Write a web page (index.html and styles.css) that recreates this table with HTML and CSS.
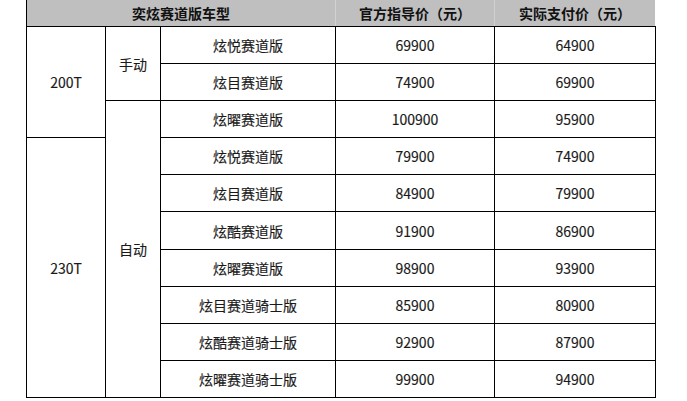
FILE: index.html
```html
<!DOCTYPE html>
<html lang="zh-CN">
<head>
<meta charset="utf-8">
<title>奕炫赛道版车型价格</title>
<link rel="stylesheet" href="styles.css">
</head>
<body>
<table class="price-table">
  <colgroup>
    <col class="c-engine">
    <col class="c-trans">
    <col class="c-model">
    <col class="c-official">
    <col class="c-actual">
  </colgroup>
  <thead>
    <tr class="head-row">
      <th colspan="3" class="first">奕炫赛道版车型</th>
      <th>官方指导价（元）</th>
      <th class="last">实际支付价（元）</th>
    </tr>
  </thead>
  <tbody>
    <tr>
      <td rowspan="3">200T</td>
      <td rowspan="2">手动</td>
      <td>炫悦赛道版</td>
      <td>69900</td>
      <td>64900</td>
    </tr>
    <tr>
      <td>炫目赛道版</td>
      <td>74900</td>
      <td>69900</td>
    </tr>
    <tr>
      <td rowspan="8">自动</td>
      <td>炫曜赛道版</td>
      <td>100900</td>
      <td>95900</td>
    </tr>
    <tr>
      <td rowspan="7">230T</td>
      <td>炫悦赛道版</td>
      <td>79900</td>
      <td>74900</td>
    </tr>
    <tr>
      <td>炫目赛道版</td>
      <td>84900</td>
      <td>79900</td>
    </tr>
    <tr>
      <td>炫酷赛道版</td>
      <td>91900</td>
      <td>86900</td>
    </tr>
    <tr>
      <td>炫曜赛道版</td>
      <td>98900</td>
      <td>93900</td>
    </tr>
    <tr>
      <td>炫目赛道骑士版</td>
      <td>85900</td>
      <td>80900</td>
    </tr>
    <tr>
      <td>炫酷赛道骑士版</td>
      <td>92900</td>
      <td>87900</td>
    </tr>
    <tr>
      <td>炫曜赛道骑士版</td>
      <td>99900</td>
      <td>94900</td>
    </tr>
  </tbody>
</table>
</body>
</html>
```

FILE: styles.css
```css
html, body {
  margin: 0;
  padding: 0;
  background: #ffffff;
}

body {
  font-family: "Noto Sans CJK SC", "Microsoft YaHei", "Liberation Sans", sans-serif;
  color: #1a1a1a;
}

.price-table {
  border-collapse: collapse;
  table-layout: fixed;
  margin-left: 26px;
  width: 630px;
  font-size: 14px;
}

.c-engine { width: 79px; }
.c-trans { width: 55px; }
.c-model { width: 175px; }
.c-official { width: 159px; }
.c-actual { width: 161px; }

.price-table th,
.price-table td {
  padding: 0;
  text-align: center;
  vertical-align: middle;
  white-space: nowrap;
  line-height: 1;
}

.price-table th {
  background: #bfbfbf;
  color: #111111;
  font-weight: bold;
  height: 26px;
  border-left: 1px solid #d2d2d2;
  border-right: 1px solid #d2d2d2;
  border-bottom: 1px solid #000000;
}

.price-table th.first {
  border-left: 1px solid #000000;
}

.price-table th.last {
  border-right: 1px solid #ffffff;
}

.price-table td {
  border: 1px solid #000000;
  height: 36.1px;
  -webkit-text-stroke: 0.15px #1a1a1a;
}
```
